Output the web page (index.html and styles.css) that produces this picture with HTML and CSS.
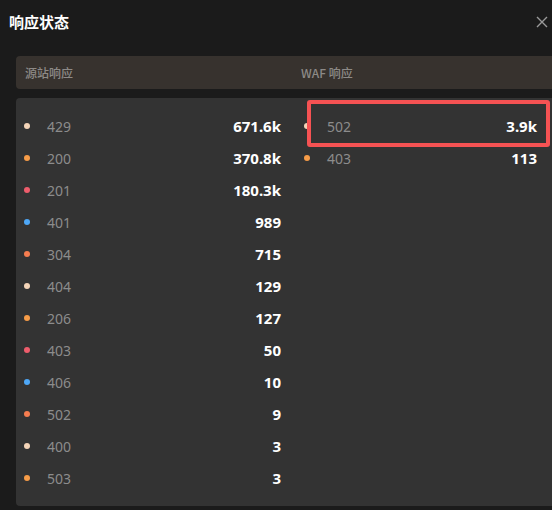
FILE: index.html
```html
<!DOCTYPE html>
<html lang="zh">
<head>
<meta charset="utf-8">
<link rel="stylesheet" href="styles.css">
</head>
<body>
<div class="dialog">
  <div class="title-bar">
    <h1 class="title">响应状态</h1>
    <svg class="close" width="12" height="12" viewBox="0 0 12 12"><path d="M1 1L11 11M11 1L1 11" stroke="#9a9a9a" stroke-width="1.4" fill="none"/></svg>
  </div>
  <div class="head">
    <div class="head-col left">源站响应</div>
    <div class="head-col right">WAF 响应</div>
  </div>
  <div class="panel">
    <div class="col left">
      <div class="row"><span class="dot peach"></span><span class="code">429</span><span class="val">671.6k</span></div>
      <div class="row"><span class="dot orange"></span><span class="code">200</span><span class="val">370.8k</span></div>
      <div class="row"><span class="dot pink"></span><span class="code">201</span><span class="val">180.3k</span></div>
      <div class="row"><span class="dot blue"></span><span class="code">401</span><span class="val">989</span></div>
      <div class="row"><span class="dot coral"></span><span class="code">304</span><span class="val">715</span></div>
      <div class="row"><span class="dot peach"></span><span class="code">404</span><span class="val">129</span></div>
      <div class="row"><span class="dot orange"></span><span class="code">206</span><span class="val">127</span></div>
      <div class="row"><span class="dot pink"></span><span class="code">403</span><span class="val">50</span></div>
      <div class="row"><span class="dot blue"></span><span class="code">406</span><span class="val">10</span></div>
      <div class="row"><span class="dot coral"></span><span class="code">502</span><span class="val">9</span></div>
      <div class="row"><span class="dot peach"></span><span class="code">400</span><span class="val">3</span></div>
      <div class="row"><span class="dot orange"></span><span class="code">503</span><span class="val">3</span></div>
    </div>
    <div class="col right">
      <div class="row"><span class="dot peach"></span><span class="code">502</span><span class="val">3.9k</span></div>
      <div class="row"><span class="dot orange"></span><span class="code">403</span><span class="val">113</span></div>
    </div>
    <div class="highlight"></div>
  </div>
</div>
</body>
</html>
```
FILE: styles.css
```css
* { box-sizing: border-box; margin: 0; padding: 0; }
html, body { background: #1b1b1b; }
body {
  width: 552px;
  height: 510px;
  overflow: hidden;
  font-family: "Noto Sans", "Noto Sans CJK SC", sans-serif;
}
.dialog {
  width: 552px;
}
.title-bar {
  height: 56px;
  position: relative;
}
.title {
  font-family: "Noto Sans CJK SC", sans-serif;
  font-size: 15px;
  font-weight: 700;
  color: #ffffff;
  padding: 11px 0 0 9px;
  line-height: 22px;
}
.close {
  position: absolute;
  left: 536px;
  top: 16px;
}
.head {
  margin-left: 16px;
  height: 33px;
  background: #37322e;
  border-radius: 4px 0 0 4px;
  display: flex;
  align-items: center;
  font-family: "Noto Sans CJK SC", sans-serif;
  font-size: 12px;
  font-weight: 500;
  color: #8d8a87;
}
.head-col.left { width: 285px; padding-left: 9px; }
.panel {
  margin: 9px 0 0 16px;
  height: 408px;
  background: #333333;
  border-radius: 4px 0 0 4px;
  padding: 12px 0 0 8px;
  display: flex;
  position: relative;
}
.col.left { width: 257px; }
.col.right { width: 233px; margin-left: 23px; }
.row {
  height: 32px;
  display: flex;
  align-items: center;
}
.dot {
  width: 6px;
  height: 6px;
  border-radius: 50%;
  flex: none;
  margin-top: -1px;
}
.code {
  margin-left: 17px;
  font-size: 14px;
  color: #8c8c8c;
  flex: 1;
}
.val {
  font-size: 15px;
  font-weight: 700;
  color: #ffffff;
}
.peach { background: #f4d4b8; }
.orange { background: #f79c48; }
.pink { background: #ee5d6c; }
.blue { background: #4ea7f7; }
.coral { background: #f67d50; }
.highlight {
  position: absolute;
  left: 291px;
  top: 2px;
  width: 243px;
  height: 47px;
  border: 4px solid #f65253;
  border-radius: 3px;
}
```
